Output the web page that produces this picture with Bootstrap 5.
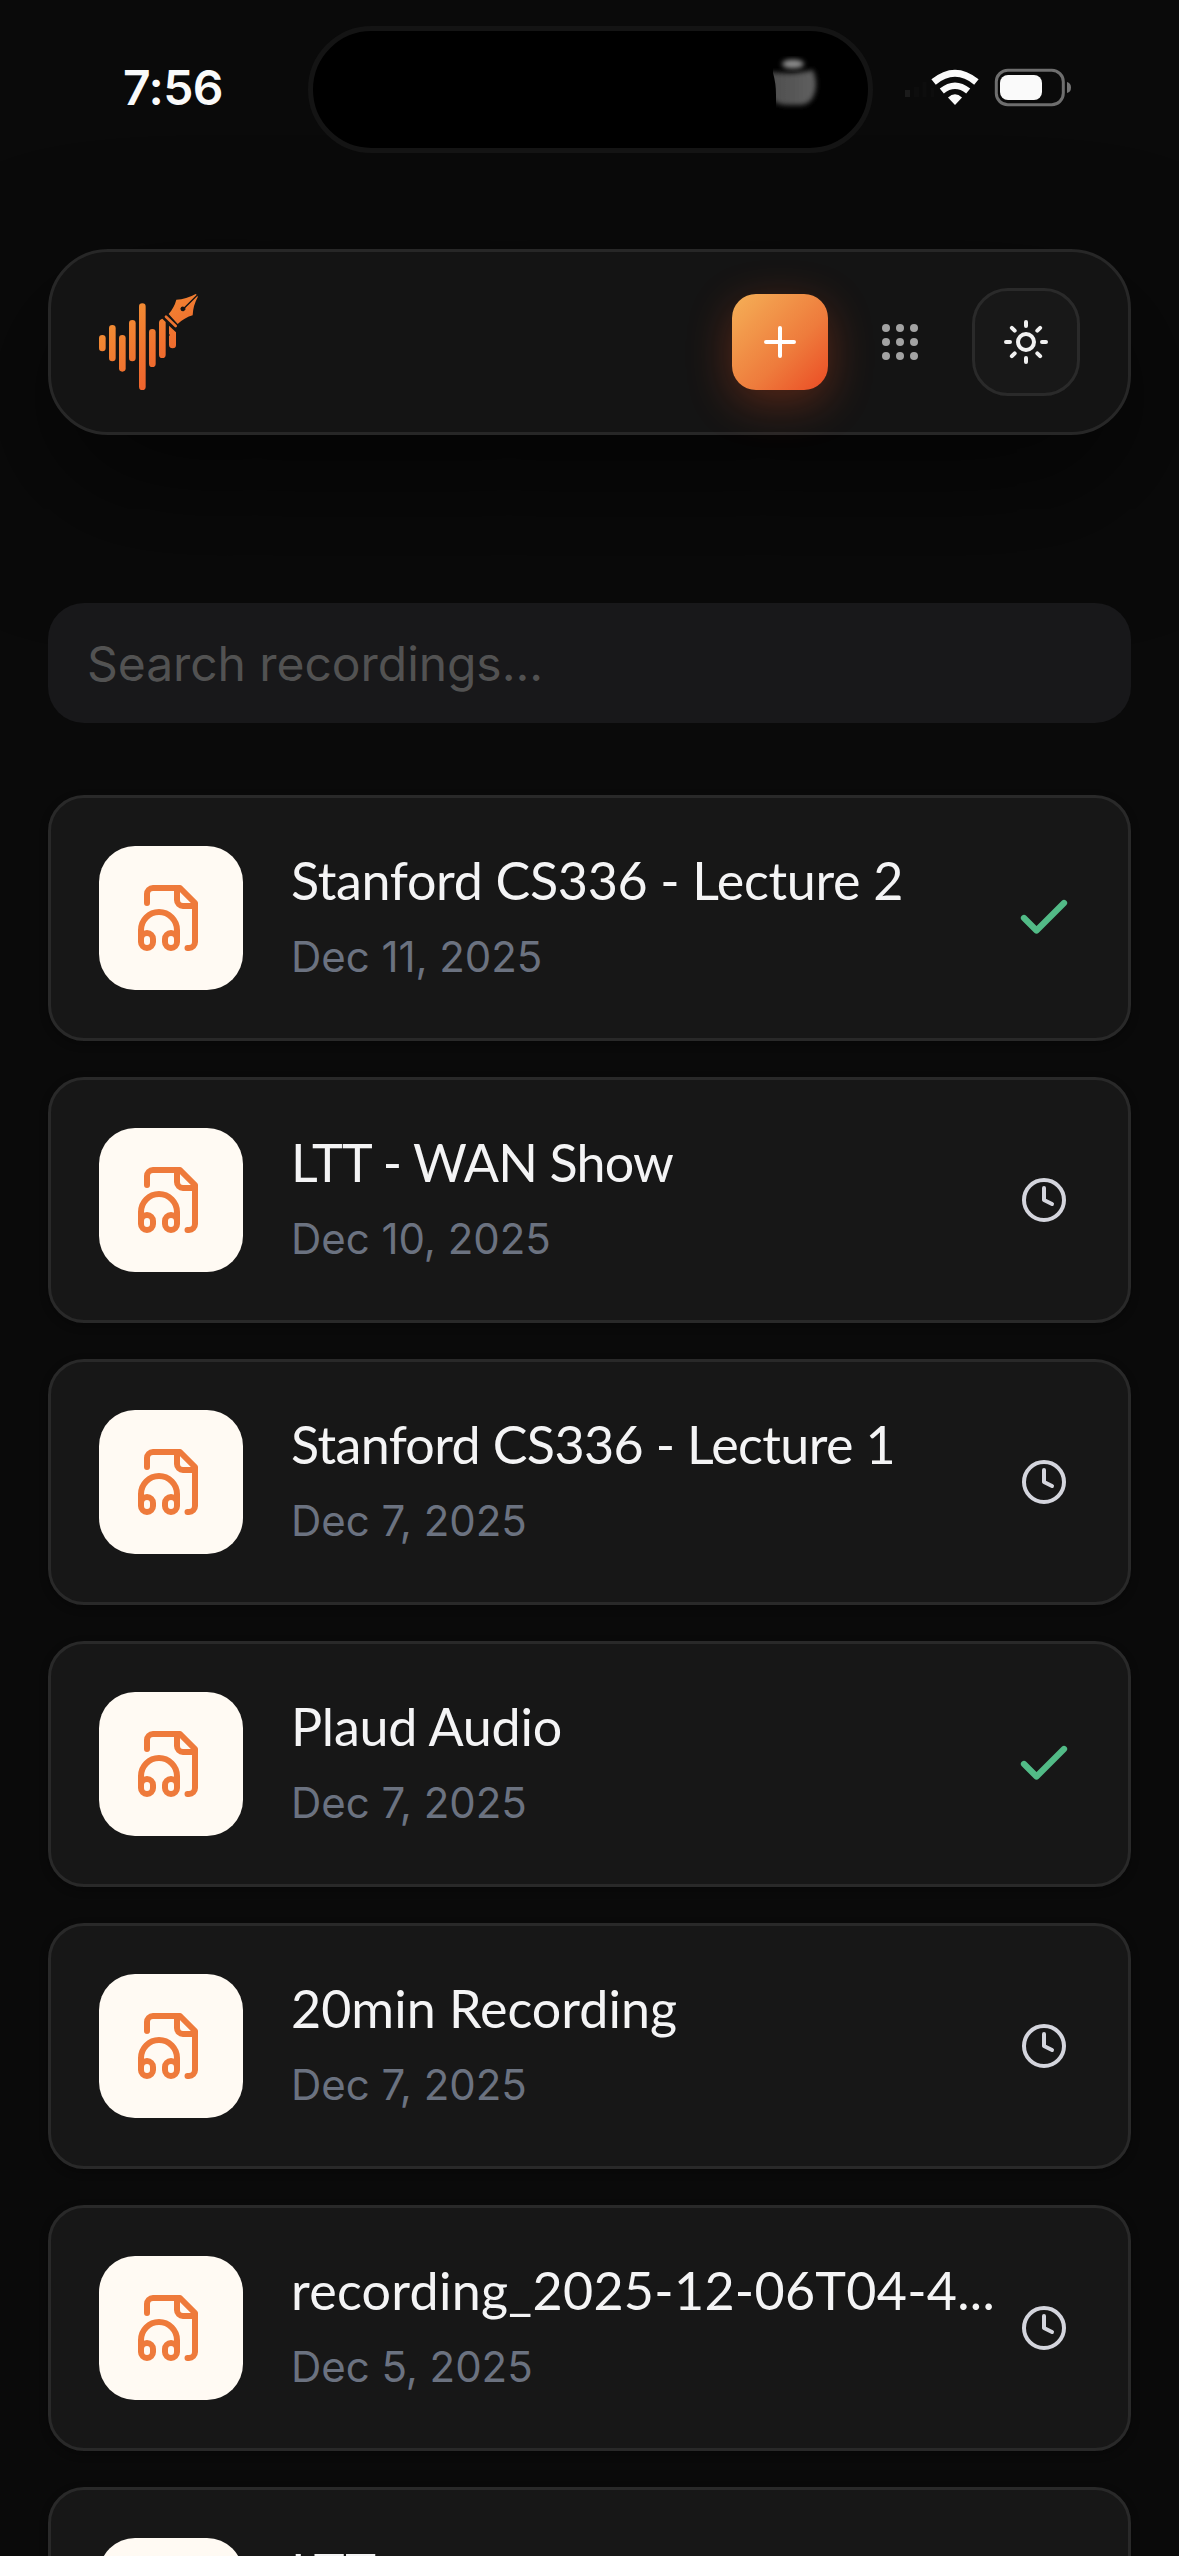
<!DOCTYPE html>
<html lang="en" data-bs-theme="dark">
<head>
<meta charset="utf-8">
<meta name="viewport" content="width=device-width, initial-scale=1">
<title>Recordings</title>
<link href="https://cdn.jsdelivr.net/npm/bootstrap@5.3.0/dist/css/bootstrap.min.css" rel="stylesheet">
<style>
html,body{height:2556px;overflow:hidden}
body{background:#0a0a0a;color:#f3f4f6;font-family:Inter,"Liberation Sans",sans-serif}
.status{height:249px;padding:26px 0 0 123px}
.clock-text{width:185px;height:110px;font-size:48px;font-weight:600;line-height:58px;padding-top:33px;letter-spacing:-.6px;color:#fafafa}
.island{width:565px;height:127px;border:5px solid #141414;border-radius:64px;background:#000;padding:22px 0 0 458px}
.sys{margin:38px 0 0 30px}
.screen{padding:0 48px}
.topbar{height:186px;border:3px solid #272727;border-radius:60px;background:#141414;padding:0 48px;box-shadow:0 54px 140px rgba(0,0,0,.62)}
.tools{gap:36px}
.btn-add{width:96px;height:96px;border-radius:24px;background:linear-gradient(135deg,#f5b057 0%,#ee7b3c 60%,#eb4b24 100%);box-shadow:0 12px 45px rgba(235,80,30,.33)}
.btn-dots{width:72px;height:72px}
.btn-sun{width:108px;height:108px;border:3px solid #2a2a2a;border-radius:36px;background:#181818}
.finder{height:120px;margin:168px 0 72px;border:0;border-radius:36px;background:#18181a!important;padding:0 39px;font-size:48px;line-height:58px;letter-spacing:-.06px}
.finder::placeholder{color:#525252;opacity:1}
.stack{gap:36px}
.rec{height:246px;flex:none;border:3px solid #292929;border-radius:36px;background:#171717;padding:0 54px 0 48px;box-shadow:0 3px 9px rgba(0,0,0,.3)}
.tile{width:144px;height:144px;border-radius:36px;background:#fffaf3;margin-right:48px}
.tile svg{width:72px;height:72px}
.words{height:144px}
.rec-name{font-family:Lato,sans-serif;font-size:52px;line-height:69px;height:69px;color:#f4f4f5;white-space:nowrap}
.rec-date{font-size:42px;line-height:60px;height:60px;margin-top:12px;color:#6b7280;letter-spacing:-.05px}
.mark-box{width:60px;height:60px}
</style>
</head>
<body>
<svg width="0" height="0" class="position-absolute" aria-hidden="true">
<symbol id="file" viewBox="0 0 24 24"><g fill="none" stroke="#ee7a3b" stroke-width="2" stroke-linecap="round" stroke-linejoin="round"><path d="M17.5 22h.5a2 2 0 0 0 2-2V7l-5-5H6a2 2 0 0 0-2 2v3"/><path d="M14 2v4a2 2 0 0 0 2 2h4"/><path d="M2 19a2 2 0 1 1 4 0v1a2 2 0 1 1-4 0v-4a6 6 0 0 1 12 0v4a2 2 0 1 1-4 0v-1a2 2 0 1 1 4 0"/></g></symbol>
<symbol id="done" viewBox="0 0 24 24"><path d="M20 6 9 17l-5-5" fill="none" stroke="#52bb87" stroke-width="2.5" stroke-linecap="round" stroke-linejoin="round"/></symbol>
<symbol id="wait" viewBox="0 0 24 24"><g fill="none" stroke="#d4d5dd" stroke-width="2" stroke-linecap="round" stroke-linejoin="round"><circle cx="12" cy="12" r="10"/><path d="M12 6v6l4 2"/></g></symbol>
</svg>

<div class="status d-flex align-items-start">
  <div class="clock-text">7:56</div>
  <div class="island"><svg class="d-block" width="60" height="60" viewBox="0 0 60 60"><defs><filter id="soft" x="-30%" y="-30%" width="160%" height="160%"><feGaussianBlur stdDeviation="2.4"/></filter><linearGradient id="lens"><stop stop-color="#4c4c4c"/><stop offset="1" stop-color="#606060"/></linearGradient><clipPath id="edge"><path d="M2 0H60V60H5V42Q5 30 2 20Z"/></clipPath></defs><g clip-path="url(#edge)"><path filter="url(#soft)" fill="url(#lens)" d="M-4 19Q20 21 24 20Q34 19 42 17Q45 24 45 31Q44 52 28 52H16Q4 52 0 44Z"/></g><ellipse filter="url(#soft)" cx="22" cy="11" rx="11" ry="4.5" fill="#8c8c8c"/></svg></div>
  <svg class="sys d-block" width="176" height="50" viewBox="903 64 176 50">
    <rect x="905" y="90" width="5" height="7" fill="#1b1b1b"/><path d="M914 87h5v10h-5zM922.500 82h4v15h-4zM931 88h3v9h-3z" fill="#0d0d0d"/>
    <g fill="none" stroke="#fafafa"><path d="M933.600 82Q955 64.500 976.400 82" stroke-width="7"/><path d="M941.800 91Q955 80.500 968.200 91" stroke-width="6.500"/></g>
    <path d="M948 97.500Q955 91 962 97.500L955 105Z" fill="#fafafa"/>
    <rect x="996.300" y="70.300" width="67" height="34.500" rx="11.500" fill="none" stroke="#6e6e6e" stroke-width="3"/>
    <rect x="1000" y="75" width="42" height="25" rx="8" fill="#fafafa"/>
    <path d="M1067 82q4 1 4 5.500t-4 5.500z" fill="#747474"/>
  </svg>
</div>

<main class="screen">
  <header class="topbar d-flex align-items-center justify-content-between">
    <svg width="100" height="98" viewBox="57 69 300 294">
      <defs><linearGradient id="brand" gradientUnits="userSpaceOnUse" x1="90" y1="110" x2="255" y2="330"><stop stop-color="#f39435"/><stop offset="1" stop-color="#ee602c"/></linearGradient></defs>
      <g fill="url(#brand)">
        <rect x="57" y="195" width="20" height="49" rx="10"/><rect x="87" y="165" width="20" height="109" rx="10"/><rect x="117" y="195" width="20" height="110" rx="10"/><rect x="147" y="150" width="20" height="124" rx="10"/><rect x="177" y="100" width="20" height="260" rx="10"/><rect x="207" y="177" width="20" height="114" rx="10"/>
        <path d="M237 158Q237 149 247 146L257 156V254Q257 264 247 264T237 254ZM267 167L288 187V225Q288 235 278 235T267 225V198L270 195L267 192Z"/>
        <path d="M266 132Q283 112 289 89Q319 88 347 72L350 74L313 111Q304 107 301 116Q303 126 312 123Q319 119 316 114L353 77V82Q339 107 338 136Q315 142 293 162Z"/>
      </g>
      <path d="M258 140L287 168" stroke="#ee7430" stroke-width="8" stroke-linecap="round"/>
    </svg>
    <div class="tools d-flex align-items-center">
      <button class="btn btn-add border-0 p-0 d-flex align-items-center justify-content-center" aria-label="Add"><svg width="48" height="48" viewBox="0 0 24 24"><path d="M5 12h14M12 5v14" stroke="#fff" stroke-width="2" stroke-linecap="round"/></svg></button>
      <button class="btn btn-dots border-0 p-0 d-flex align-items-center justify-content-center" aria-label="Apps"><svg width="48" height="48" viewBox="0 0 48 48" fill="#a3a3a3"><circle cx="10" cy="10" r="4"/><circle cx="24" cy="10" r="4"/><circle cx="38" cy="10" r="4"/><circle cx="10" cy="24" r="4"/><circle cx="24" cy="24" r="4"/><circle cx="38" cy="24" r="4"/><circle cx="10" cy="38" r="4"/><circle cx="24" cy="38" r="4"/><circle cx="38" cy="38" r="4"/></svg></button>
      <button class="btn btn-sun p-0 d-flex align-items-center justify-content-center" aria-label="Theme"><svg width="48" height="48" viewBox="0 0 24 24" fill="none" stroke="#f0f0f0" stroke-width="2" stroke-linecap="round"><circle cx="12" cy="12" r="4"/><path d="M12 2v2M12 20v2M4.930 4.930l1.410 1.410M17.660 17.660l1.410 1.410M2 12h2M20 12h2M6.340 17.660l-1.410 1.410M19.070 4.930l-1.410 1.410"/></svg></button>
    </div>
  </header>

  <input class="finder form-control" type="text" placeholder="Search recordings..." aria-label="Search recordings">

  <section class="stack d-flex flex-column">
    <article class="rec d-flex align-items-center"><div class="tile d-flex align-items-center justify-content-center flex-shrink-0"><svg><use href="#file"/></svg></div><div class="words flex-grow-1"><div class="rec-name"><span data-w="612">Stanford CS336 - Lecture 2</span></div><div class="rec-date">Dec 11, 2025</div></div><div class="mark-box d-flex align-items-center justify-content-center flex-shrink-0"><svg width="60" height="60"><use href="#done"/></svg></div></article>
    <article class="rec d-flex align-items-center"><div class="tile d-flex align-items-center justify-content-center flex-shrink-0"><svg><use href="#file"/></svg></div><div class="words flex-grow-1"><div class="rec-name"><span data-w="382">LTT - WAN Show</span></div><div class="rec-date">Dec 10, 2025</div></div><div class="mark-box d-flex align-items-center justify-content-center flex-shrink-0"><svg width="48" height="48"><use href="#wait"/></svg></div></article>
    <article class="rec d-flex align-items-center"><div class="tile d-flex align-items-center justify-content-center flex-shrink-0"><svg><use href="#file"/></svg></div><div class="words flex-grow-1"><div class="rec-name"><span data-w="604">Stanford CS336 - Lecture 1</span></div><div class="rec-date">Dec 7, 2025</div></div><div class="mark-box d-flex align-items-center justify-content-center flex-shrink-0"><svg width="48" height="48"><use href="#wait"/></svg></div></article>
    <article class="rec d-flex align-items-center"><div class="tile d-flex align-items-center justify-content-center flex-shrink-0"><svg><use href="#file"/></svg></div><div class="words flex-grow-1"><div class="rec-name"><span data-w="271">Plaud Audio</span></div><div class="rec-date">Dec 7, 2025</div></div><div class="mark-box d-flex align-items-center justify-content-center flex-shrink-0"><svg width="60" height="60"><use href="#done"/></svg></div></article>
    <article class="rec d-flex align-items-center"><div class="tile d-flex align-items-center justify-content-center flex-shrink-0"><svg><use href="#file"/></svg></div><div class="words flex-grow-1"><div class="rec-name"><span data-w="386">20min Recording</span></div><div class="rec-date">Dec 7, 2025</div></div><div class="mark-box d-flex align-items-center justify-content-center flex-shrink-0"><svg width="48" height="48"><use href="#wait"/></svg></div></article>
    <article class="rec d-flex align-items-center"><div class="tile d-flex align-items-center justify-content-center flex-shrink-0"><svg><use href="#file"/></svg></div><div class="words flex-grow-1"><div class="rec-name"><span data-w="704">recording_2025-12-06T04-4...</span></div><div class="rec-date">Dec 5, 2025</div></div><div class="mark-box d-flex align-items-center justify-content-center flex-shrink-0"><svg width="48" height="48"><use href="#wait"/></svg></div></article>
    <article class="rec d-flex align-items-center"><div class="tile d-flex align-items-center justify-content-center flex-shrink-0"><svg><use href="#file"/></svg></div><div class="words flex-grow-1"><div class="rec-name"><span data-w="86">LTT</span></div></div></article>
  </section>
</main>
<script src="https://cdn.jsdelivr.net/npm/bootstrap@5.3.0/dist/js/bootstrap.bundle.min.js"></script>
<script>
// Track each title to its intended line width.
document.querySelectorAll('[data-w]').forEach(function (el) {
  var gap = (el.dataset.w - el.getBoundingClientRect().width) / el.textContent.length;
  el.style.letterSpacing = gap.toFixed(3) + 'px';
});
</script>
</body>
</html>
